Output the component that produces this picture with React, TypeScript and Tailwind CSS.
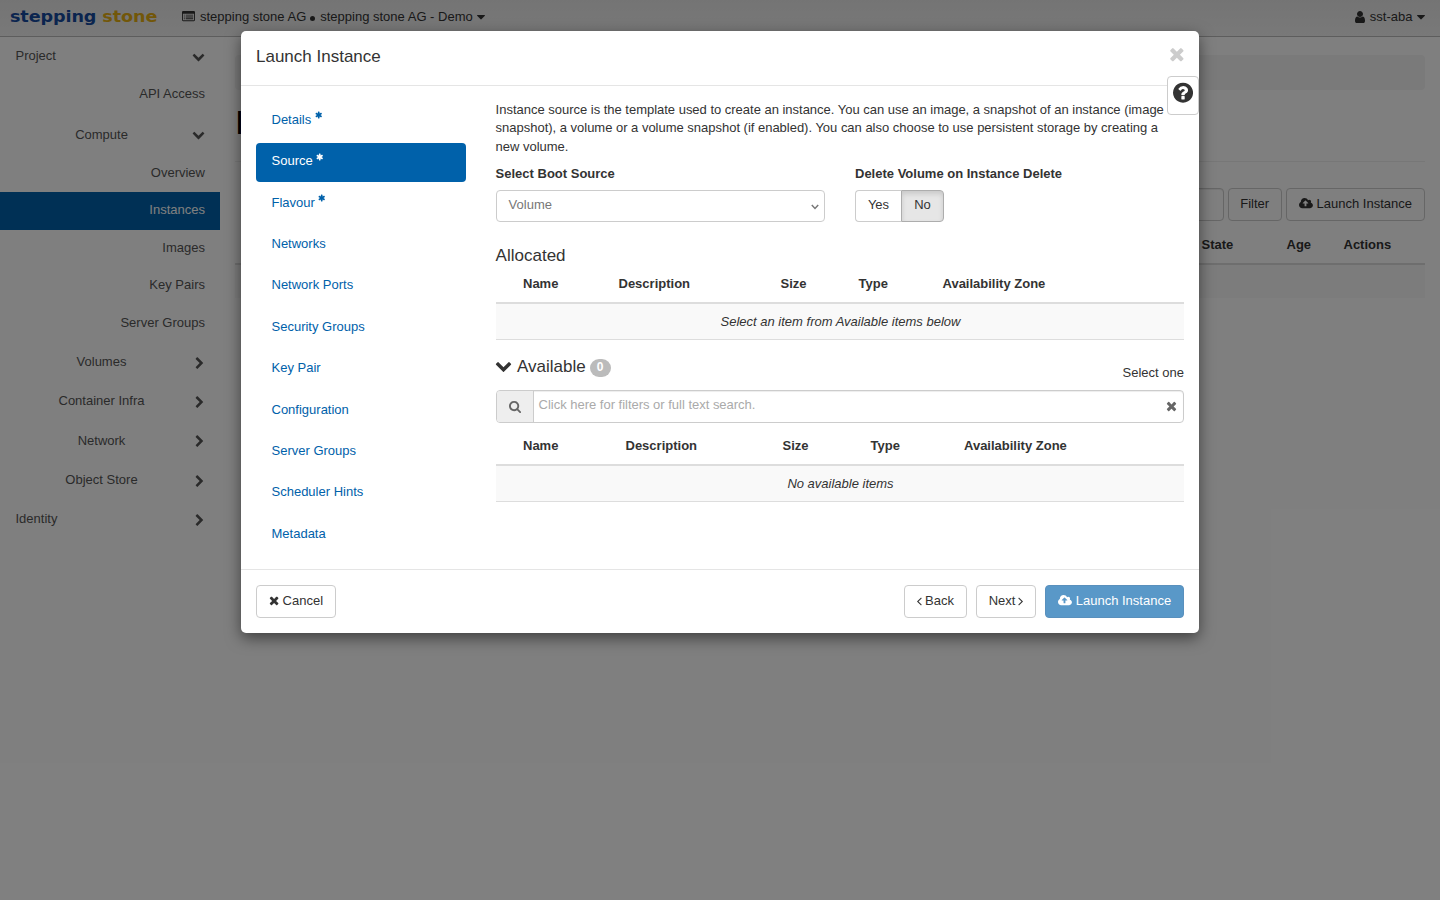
import type { ReactNode } from "react";
import clsx from "clsx";

const ICONS = {
  chevronDown: {
    box: "0 0 1792 1792",
    d: "M1683 808l-742 741q-19 19-45 19t-45-19l-742-741q-19-19-19-45.5t19-45.5l166-165q19-19 45-19t45 19l531 531 531-531q19-19 45-19t45 19l166 165q19 19 19 45.5t-19 45.5z",
  },
  chevronRight: {
    box: "256 0 1280 1792",
    d: "M1363 877l-742 742q-19 19-45 19t-45-19l-166-166q-19-19-19-45t19-45l531-531-531-531q-19-19-19-45t19-45l166-166q19-19 45-19t45 19l742 742q19 19 19 45t-19 45z",
  },
  times: {
    box: "192 0 1408 1792",
    d: "M1490 1322q0 40-28 68l-136 136q-28 28-68 28t-68-28l-294-294-294 294q-28 28-68 28t-68-28l-136-136q-28-28-28-68t28-68l294-294-294-294q-28-28-28-68t28-68l136-136q28-28 68-28t68 28l294 294 294-294q28-28 68-28t68 28l136 136q28 28 28 68t-28 68l-294 294 294 294q28 28 28 68z",
  },
  search: {
    box: "64 0 1664 1792",
    d: "M1216 832q0-185-131.5-316.5t-316.5-131.5-316.5 131.5-131.5 316.5 131.5 316.5 316.5 131.5 316.5-131.5 131.5-316.5zm512 832q0 52-38 90t-90 38q-54 0-90-38l-343-342q-179 124-399 124-143 0-273.5-55.5t-225-150-150-225-55.5-273.5 55.5-273.5 150-225 225-150 273.5-55.5 273.5 55.5 225 150 150 225 55.5 273.5q0 220-124 399l343 343q37 37 37 90z",
  },
  cloudUpload: {
    box: "-64 0 1920 1792",
    d: "M1216 864q0-14-9-23l-352-352q-9-9-23-9t-23 9l-351 351q-10 12-10 24 0 14 9 23t23 9h224v352q0 13 9.5 22.5t22.5 9.5h192q13 0 22.5-9.5t9.5-22.5v-352h224q13 0 22.5-9.5t9.5-22.5zm640 288q0 159-112.5 271.5t-271.5 112.5h-1088q-185 0-316.5-131.5t-131.5-316.5q0-130 70-240t188-165q-2-30-2-43 0-212 150-362t362-150q156 0 285.5 87t188.5 231q71-62 166-62 106 0 181 75t75 181q0 76-41 138 130 31 213.5 135.5t83.5 238.5z",
  },
  question: {
    box: "128 0 1536 1792",
    d: "M1024 1376v-192q0-14-9-23t-23-9h-192q-14 0-23 9t-9 23v192q0 14 9 23t23 9h192q14 0 23-9t9-23zm256-672q0-88-55.5-163t-138.5-116-170-41q-243 0-371 213-15 24 8 42l132 100q7 6 19 6 16 0 25-12 53-68 86-92 34-24 86-24 48 0 85.5 26t37.5 59q0 38-20 61t-68 45q-63 28-115.5 86.5t-52.5 125.5v36q0 14 9 23t23 9h192q14 0 23-9t9-23q0-19 21.5-49.5t54.5-49.5q32-18 49-28.5t46-35 44.5-48 28-60.5 12.5-81zm384 192q0 209-103 385.5t-279.5 279.5-385.5 103-385.5-103-279.5-279.5-103-385.5 103-385.5 279.5-279.5 385.5-103 385.5 103 279.5 279.5 103 385.5z",
  },
  asterisk: {
    box: "64 0 1664 1792",
    d: "M1546 1050q46 26 59.5 77.5t-12.5 97.5l-64 110q-26 46-77.5 59.5t-97.5-12.5l-266-153v307q0 52-38 90t-90 38h-128q-52 0-90-38t-38-90v-307l-266 153q-46 26-97.5 12.5t-77.5-59.5l-64-110q-26-46-12.5-97.5t59.5-77.5l266-154-266-154q-46-26-59.5-77.5t12.5-97.5l64-110q26-46 77.5-59.5t97.5 12.5l266 153v-307q0-52 38-90t90-38h128q52 0 90 38t38 90v307l266-153q46-26 97.5-12.5t77.5 59.5l64 110q26 46 12.5 97.5t-59.5 77.5l-266 154z",
  },
  user: {
    box: "256 0 1280 1792",
    d: "M1536 1399q0 109-62.5 187t-150.5 78h-854q-88 0-150.5-78t-62.5-187q0-85 8.5-160.5t31.5-152 58.5-131 94-89 134.5-34.5q131 128 313 128t313-128q76 0 134.5 34.5t94 89 58.5 131 31.5 152 8.5 160.5zm-256-887q0 159-112.5 271.5t-271.5 112.5-271.5-112.5-112.5-271.5 112.5-271.5 271.5-112.5 271.5 112.5 112.5 271.5z",
  },
  angleLeft: {
    box: "608 0 640 1792",
    d: "M1203 544q0 13-10 23l-393 393 393 393q10 10 10 23t-10 23l-50 50q-10 10-23 10t-23-10l-466-466q-10-10-10-23t10-23l466-466q10-10 23-10t23 10l50 50q10 10 10 23z",
  },
  angleRight: {
    box: "544 0 640 1792",
    d: "M1171 960q0 13-10 23l-466 466q-10 10-23 10t-23-10l-50-50q-10-10-10-23t10-23l393-393-393-393q-10-10-10-23t10-23l50-50q10-10 23-10t23 10l466 466q10 10 10 23z",
  },
  caretDown: {
    box: "384 0 1024 1792",
    d: "M1408 704q0 26-19 45l-448 448q-19 19-45 19t-45-19l-448-448q-19-19-19-45t19-45 45-19h896q26 0 45 19t19 45z",
  },
  listAlt: {
    box: "0 0 1792 1792",
    d: "M160 128h1472q160 0 160 160v1088q0 160-160 160h-1472q-160 0-160-160v-1088q0-160 160-160zM128 512v864q0 32 32 32h1472q32 0 32-32v-864zM256 640h128v128h-128zM512 640h1024v128h-1024zM256 896h128v128h-128zM512 896h1024v128h-1024zM256 1152h128v128h-128zM512 1152h1024v128h-1024z",
  },
};

function Icon({ name, className = "h-[13px] mb-px" }: { name: keyof typeof ICONS; className?: string }) {
  return (
    <svg viewBox={ICONS[name].box} fill="currentColor" fillRule="evenodd" className={clsx("w-auto shrink-0", className)}>
      <path d={ICONS[name].d} />
    </svg>
  );
}

function Button({ children, className }: { children: ReactNode; className?: string }) {
  return (
    <button
      className={clsx(
        "flex items-center justify-center whitespace-nowrap rounded-[4px] border pb-px",
        className ?? "h-[33px] border-[#ccc] bg-white px-3"
      )}
    >
      {children}
    </button>
  );
}

function Group({ label, open, nested }: { label: string; open?: boolean; nested?: boolean }) {
  return (
    <div className="flex h-[39.35px] items-center justify-between pl-[15.5px] pr-[15.5px]">
      <span className={clsx("pb-[0.8px]", nested && "w-[172px] text-center")}>{label}</span>
      <Icon
        name={open ? "chevronDown" : "chevronRight"}
        className={open ? "h-[13px]" : "mt-[2px] h-[13px]"}
      />
    </div>
  );
}

function Item({ label, active }: { label: string; active?: boolean }) {
  return (
    <div
      className={clsx(
        "flex h-[37.6px] items-center justify-end pb-[1.4px] pr-[15px]",
        active && "bg-[#0061aa] text-white"
      )}
    >
      {label}
    </div>
  );
}

const STEPS = [
  { label: "Details", required: true },
  { label: "Source", required: true, active: true },
  { label: "Flavour", required: true },
  { label: "Networks" },
  { label: "Network Ports" },
  { label: "Security Groups" },
  { label: "Key Pair" },
  { label: "Configuration" },
  { label: "Server Groups" },
  { label: "Scheduler Hints" },
  { label: "Metadata" },
];

function SourceTable({ columns, empty }: { columns: string; empty: string }) {
  return (
    <div>
      <div className={clsx("grid h-[38px] items-center border-b-2 border-[#ddd] pl-[27px] font-bold", columns)}>
        <span>Name</span>
        <span>Description</span>
        <span>Size</span>
        <span>Type</span>
        <span>Availability Zone</span>
      </div>
      <div className="flex h-9 items-center justify-center border-b border-[#ddd] bg-[#f9f9f9] pl-px pt-px italic">
        {empty}
      </div>
    </div>
  );
}

function Page() {
  return (
    <div className="h-[900px] w-[1440px] overflow-hidden bg-white">
      <header className="flex h-[37px] items-center justify-between border-b border-[#bbb] bg-linear-to-b from-[#e9e9e9] to-[#f2f2f2] pb-[3px] pl-[10px] pr-[15px]">
        <div className="flex items-center">
          <div className="w-[172px] origin-left scale-x-110 whitespace-nowrap pt-px font-['DejaVu_Sans'] text-[16px] font-bold tracking-[-0.1px] text-[#164a9e]">
            stepping <span className="text-[#e5ae13]">stone</span>
          </div>
          <Icon name="listAlt" className="h-[13px]" />
          <span className="ml-[5px]">stepping stone AG</span>
          <span className="ml-[4px] mr-[5px] mt-[3px] size-[5px] rounded-full bg-[#333]" />
          <span>stepping stone AG - Demo</span>
          <Icon name="caretDown" className="ml-1 h-[14px]" />
        </div>
        <div className="flex items-center">
          <Icon name="user" className="h-[14px]" />
          <span className="ml-[5px]">sst-aba</span>
          <Icon name="caretDown" className="ml-[4.5px] h-[14px]" />
        </div>
      </header>

      <div className="flex">
        <nav className="w-[220px] shrink-0 text-[#555]">
          <Group label="Project" open />
          <Item label="API Access" />
          <div className="h-[1.3px]" />
          <Group label="Compute" open nested />
          <Item label="Overview" />
          <Item label="Instances" active />
          <Item label="Images" />
          <Item label="Key Pairs" />
          <Item label="Server Groups" />
          <Group label="Volumes" nested />
          <Group label="Container Infra" nested />
          <Group label="Network" nested />
          <Group label="Object Store" nested />
          <Group label="Identity" />
        </nav>

        <main className="flex-1 px-[15px] pt-[18px]">
          <div className="h-[35px] rounded-[4px] bg-[#f5f5f5]" />
          <h1 className="flex h-[72px] items-center border-b border-[#eee] pb-[6px] text-[33px] text-black">
            Instances
          </h1>
          <div className="mt-[26px] flex justify-end gap-1">
            <div className="h-[33px] w-[240px] rounded-[4px] border border-[#ccc] shadow-[inset_0_1px_1px_rgba(0,0,0,0.075)]" />
            <Button className="h-[33px] w-[54px] border-[#ccc] bg-white">Filter</Button>
            <Button>
              <Icon name="cloudUpload" />
              <span className="ml-1">Launch Instance</span>
            </Button>
          </div>
          <div className="flex h-[44px] items-center justify-end border-b-2 border-[#ddd] pt-[5px] font-bold">
            <span className="w-[85px]">State</span>
            <span className="w-[57px]">Age</span>
            <span className="w-[81.5px]">Actions</span>
          </div>
          <div className="h-[33px] bg-[#f9f9f9]" />
        </main>
      </div>
    </div>
  );
}

function LaunchModal() {
  return (
    <div className="relative flex h-[602px] w-[958px] flex-col rounded-[5px] bg-white shadow-[0_5px_15px_rgba(0,0,0,0.5)]">
      <div className="flex h-[55px] items-center justify-between border-b border-[#e5e5e5] px-[15px] pb-[3px]">
        <h4 className="text-[17px]">Launch Instance</h4>
        <Icon name="times" className="-mr-[0.4px] -mt-[5px] h-5 text-[#ccc]" />
      </div>

      {/* help toggle hangs over the header rule */}
      <button className="absolute right-0 top-[45px] flex h-[39px] w-8 justify-center rounded-[4px] border border-[#ccc] bg-white pt-[4.4px]">
        <Icon name="question" className="h-[23.4px]" />
      </button>

      <div className="flex flex-1 gap-[30px] px-[15px]">
        <ul className="flex w-[210px] flex-col gap-[2px] pt-[15.6px] text-[#0061aa]">
          {STEPS.map((s) => (
            <li
              key={s.label}
              className={clsx(
                "flex h-[39.4px] items-center rounded-[4px] pb-[3px] pl-[15.5px]",
                s.active && "bg-[#0061aa] text-white"
              )}
            >
              {s.label}
              {s.required && <Icon name="asterisk" className="mb-[9px] ml-[3.4px] h-[8px]" />}
            </li>
          ))}
        </ul>

        <section className="w-[688px] pt-[14.6px]">
          <p className="-ml-[0.4px] leading-[18.57px] tracking-[-0.015px]">
            Instance source is the template used to create an instance. You can use an image, a snapshot of an instance
            (image snapshot), a volume or a volume snapshot (if enabled). You can also choose to use persistent storage
            by creating a new volume.
          </p>
          <div className="mt-[8.7px] flex gap-[30px]">
            <div className="w-[329px]">
              <div className="-ml-[0.4px] font-bold leading-[18px]">Select Boot Source</div>
              <div className="mt-[7px] flex h-8 items-center justify-between rounded-[4px] border border-[#ccc] pb-[2px] pl-[11.6px] pr-[5px] text-[#777]">
                Volume
                <svg viewBox="0 0 8 6" className="mt-1 h-[6px] w-2 fill-none stroke-current stroke-[1.5]">
                  <path d="M0.8 1L4 4.4 7.2 1" />
                </svg>
              </div>
            </div>
            <div>
              <div className="font-bold leading-[18px]">Delete Volume on Instance Delete</div>
              <div className="mt-[7px] flex">
                <Button className="h-8 w-[46px] rounded-r-none border-r-0 border-[#ccc]">Yes</Button>
                <Button className="h-8 w-[43px] rounded-l-none border-[#adadad] bg-[#e6e6e6] shadow-[inset_0_3px_5px_rgba(0,0,0,0.125)]">
                  No
                </Button>
              </div>
            </div>
          </div>

          <h4 className="-ml-[0.4px] mt-[23px] h-[21px] text-[17px] leading-[21px]">Allocated</h4>
          <SourceTable
            columns="grid-cols-[95.5px_162px_78px_84px_1fr]"
            empty="Select an item from Available items below"
          />

          <div className="mt-3 flex h-[38px] items-start justify-between">
            <h4 className="flex items-center pt-1 text-[17px] leading-[21px]">
              <Icon name="chevronDown" className="-ml-[0.6px] mb-[2px] mr-[4.6px] h-[17px]" />
              Available
              <span className="ml-1 mt-[3px] h-[18px] w-[21px] rounded-[10px] bg-[#bbb] text-center text-[12px] font-bold leading-[17px] text-white">
                0
              </span>
            </h4>
            <span className="mt-3">Select one</span>
          </div>
          <div className="flex h-[33px] rounded-[4px] border border-[#ccc] text-[#666] shadow-[inset_0_1px_1px_rgba(0,0,0,0.075)]">
            <div className="flex w-[37px] items-center justify-center rounded-l-[3px] border-r border-[#ccc] bg-[#eee]">
              <Icon name="search" className="h-[13px]" />
            </div>
            <span className="flex-1 pl-[4.6px] leading-[28px] tracking-[-0.015px] text-[#aaa]">
              Click here for filters or full text search.
            </span>
            <Icon name="times" className="mr-[6.4px] mt-[8px] h-[14px]" />
          </div>
          <div className="h-[5px]" />
          <SourceTable columns="grid-cols-[102.5px_157px_88px_93.5px_1fr]" empty="No available items" />
        </section>
      </div>

      <div className="flex h-16 items-center justify-between border-t border-[#e5e5e5] px-[15px]">
        <Button className="h-[33px] w-20 border-[#ccc] bg-white">
          <Icon name="times" />
          <span className="ml-[3.5px]">Cancel</span>
        </Button>
        <div className="flex gap-[9px]">
          <Button className="h-[33px] w-[63px] border-[#ccc] bg-white">
            <Icon name="angleLeft" className="mb-px h-[14px]" />
            <span className="ml-[3px]">Back</span>
          </Button>
          <Button className="h-[33px] w-[60px] border-[#ccc] bg-white">
            <span className="mr-[3px]">Next</span>
            <Icon name="angleRight" className="mb-px h-[14px]" />
          </Button>
          <Button className="h-[33px] w-[139px] border-[#5990bd] bg-[#5998c8] text-white">
            <Icon name="cloudUpload" />
            <span className="ml-1">Launch Instance</span>
          </Button>
        </div>
      </div>
    </div>
  );
}

export default function App() {
  return (
    <div className="relative h-[900px] w-[1440px] overflow-hidden font-['Nimbus_Sans','Liberation_Sans',sans-serif] text-[13px] leading-[18px] text-[#333]">
      <Page />
      <div className="absolute inset-0 flex items-start justify-center bg-black/50 pt-[31px]">
        <LaunchModal />
      </div>
    </div>
  );
}
